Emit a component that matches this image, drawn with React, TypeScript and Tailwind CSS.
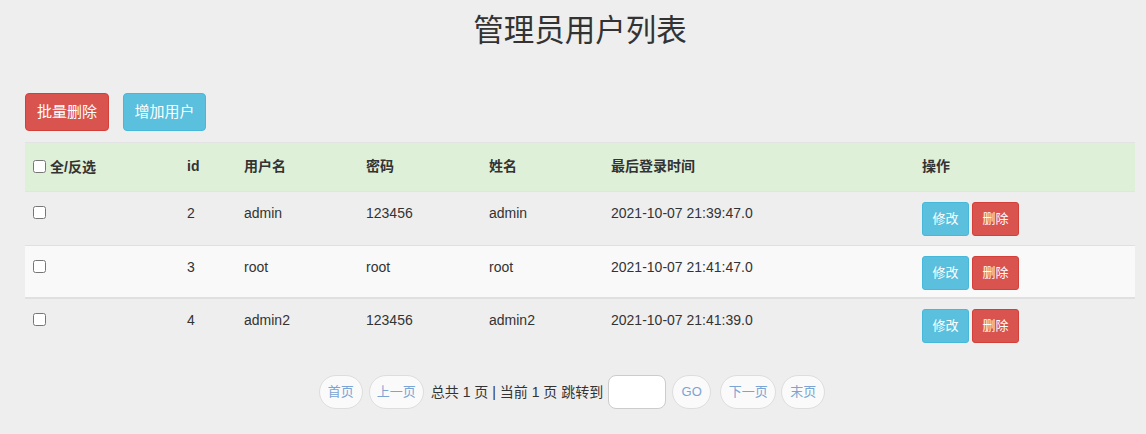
import React from "react";

const users = [
  { id: 2, name: "admin", pwd: "123456", real: "admin", last: "2021-10-07 21:39:47.0" },
  { id: 3, name: "root", pwd: "root", real: "root", last: "2021-10-07 21:41:47.0" },
  { id: 4, name: "admin2", pwd: "123456", real: "admin2", last: "2021-10-07 21:41:39.0" },
];

const cols = "grid grid-cols-[154px_57px_122px_123px_122px_311px_1fr]";

const Pill = ({ label, w }: { label: string; w: string }) => (
  <button
    className={`${w} h-[34px] rounded-full border border-[#dddddd] bg-[#fafafa] text-[13px] text-[#7ba4d4] flex items-center justify-center`}
  >
    {label}
  </button>
);

export default function App() {
  return (
    <div
      className="min-h-[434px] bg-[#eeeeee] text-[#333333] pl-[25px] pr-[11px]"
      style={{ fontFamily: '"Liberation Sans", "Noto Sans CJK SC", sans-serif' }}
    >
      {/* Title */}
      <h1 className="pt-[14px] text-center text-[30.5px] leading-[33px] font-normal">
        管理员用户列表
      </h1>

      {/* Toolbar */}
      <div className="mt-[46px] flex gap-[14px]">
        <button className="w-[84px] h-[38px] rounded-[4px] border border-[#d43f3a] bg-[#d9534f] text-white text-[15px]">
          批量删除
        </button>
        <button className="w-[83px] h-[38px] rounded-[4px] border border-[#46b8da] bg-[#5bc0de] text-white text-[15px]">
          增加用户
        </button>
      </div>

      {/* Table */}
      <div className="mt-[11px] text-[14px]">
        <div className={`${cols} h-[50px] bg-[#dff0d8] border-t border-b border-[#e3e3e3] font-bold`}>
          <div className="px-2 pt-[14px] flex items-start gap-[4px]">
            <input type="checkbox" className="mt-[3px] w-[13px] h-[13px]" />
            <span className="leading-5">全/反选</span>
          </div>
          <div className="px-2 pt-[13px] leading-5">id</div>
          <div className="px-2 pt-[13px] leading-5">用户名</div>
          <div className="px-2 pt-[13px] leading-5">密码</div>
          <div className="px-2 pt-[13px] leading-5">姓名</div>
          <div className="px-2 pt-[13px] leading-5">最后登录时间</div>
          <div className="px-2 pt-[13px] leading-5">操作</div>
        </div>

        {users.map((u, i) => (
          <div
            key={u.id}
            className={`${cols} h-[53px] ${i > 0 ? "border-t border-[#e0e0e0]" : ""} ${
              i === 1 ? "bg-[#f9f9f9] border-b" : ""
            }`}
          >
            <div className="px-2 pt-[14px]">
              <input type="checkbox" className="block w-[13px] h-[13px]" />
            </div>
            <div className="px-2 pt-[11px] leading-5">{u.id}</div>
            <div className="px-2 pt-[11px] leading-5">{u.name}</div>
            <div className="px-2 pt-[11px] leading-5">{u.pwd}</div>
            <div className="px-2 pt-[11px] leading-5">{u.real}</div>
            <div className="px-2 pt-[11px] leading-5">{u.last}</div>
            <div className="px-2 pt-[10px] flex items-start gap-[3px]">
              <button className="w-[47px] h-[34px] rounded-[3px] border border-[#46b8da] bg-[#5bc0de] text-white text-[13px]">
                修改
              </button>
              <button className="w-[47px] h-[34px] rounded-[3px] border border-[#d43f3a] bg-[#d9534f] text-white text-[13px]">
                删除
              </button>
            </div>
          </div>
        ))}
      </div>

      {/* Pagination */}
      <div className="mt-[24px] pr-[16px] flex justify-center items-center text-[14px]">
        <Pill label="首页" w="w-[44px]" />
        <div className="w-[6px]" />
        <Pill label="上一页" w="w-[55px]" />
        <span className="ml-[7px] mr-[5px] whitespace-nowrap">总共 1 页 | 当前 1 页 跳转到</span>
        <input
          type="text"
          className="w-[58px] h-[34px] rounded-[8px] border border-[#cccccc] bg-white outline-none"
        />
        <div className="w-[6px]" />
        <Pill label="GO" w="w-[39px]" />
        <div className="w-[9px]" />
        <Pill label="下一页" w="w-[56px]" />
        <div className="w-[5px]" />
        <Pill label="末页" w="w-[44px]" />
      </div>
    </div>
  );
}
